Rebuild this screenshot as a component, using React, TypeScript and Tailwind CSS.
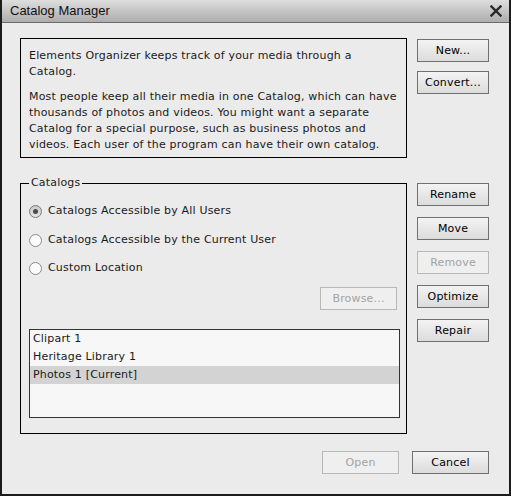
import React from 'react';

const font = { fontFamily: '"DejaVu Sans", Verdana, sans-serif' };

function Btn({ label, w = 'w-[72px]', disabled = false }: { label: string; w?: string; disabled?: boolean }) {
  return (
    <button
      type="button"
      disabled={disabled}
      className={`${w} h-[23px] shrink-0 border text-[11px] leading-none tracking-[0.18px] ${
        disabled
          ? 'border-[#b8b8b8] bg-[#efefef] text-[#a3a3a3]'
          : 'border-[#707070] bg-gradient-to-b from-[#f3f3f3] to-[#dcdcdc] text-black'
      }`}
    >
      {label}
    </button>
  );
}

function Radio({ label, checked = false }: { label: string; checked?: boolean }) {
  return (
    <div className="flex h-[16px] items-center gap-[6px]">
      <span
        className={`flex h-[13px] w-[13px] items-center justify-center rounded-full border ${
          checked ? 'border-[#7a7a7a] bg-gradient-to-b from-[#c8c8c8] to-[#e6e6e6]' : 'border-[#8a8a8a] bg-[#fbfbfb]'
        }`}
      >
        {checked ? <span className="h-[5px] w-[5px] rounded-full bg-[#4a4a4a]" /> : null}
      </span>
      <span>{label}</span>
    </div>
  );
}

const catalogs = ['Clipart 1', 'Heritage Library 1', 'Photos 1 [Current]'];

export default function App() {
  return (
    <div
      className="flex h-[496px] w-[511px] flex-col border-x-2 border-b-2 border-[#1c1c1c] bg-[#ebebeb] text-[11px] leading-[16px] tracking-[0.18px] text-[#1a1a1a]"
      style={font}
    >
      <div className="flex h-[23px] shrink-0 items-center justify-between border-b border-[#6b6b6b] bg-gradient-to-b from-[#dedede] to-[#adadad] pl-[8px] pr-[7px]">
        <span className="font-['Liberation_Sans',Arial,sans-serif] text-[13px] tracking-normal text-[#111]">
          Catalog Manager
        </span>
        <svg width="12" height="12" viewBox="0 0 12 12" className="text-[#2a2a2a]">
          <path d="M1.5 1.5 L10.5 10.5 M10.5 1.5 L1.5 10.5" stroke="currentColor" strokeWidth="2.4" strokeLinecap="square" />
        </svg>
      </div>

      <div className="flex flex-1 flex-col pl-[18px] pr-[20px]">
        <div className="mt-[15px] flex items-start gap-[10px]">
          <div className="h-[120px] w-[387px] shrink-0 whitespace-nowrap border border-black px-[8px] pt-[9px]">
            <p>
              Elements Organizer keeps track of your media through a
              <br />
              Catalog.
            </p>
            <p className="mt-[9px]">
              Most people keep all their media in one Catalog, which can have
              <br />
              thousands of photos and videos. You might want a separate
              <br />
              Catalog for a special purpose, such as business photos and
              <br />
              videos. Each user of the program can have their own catalog.
            </p>
          </div>
          <div className="mt-[1px] flex flex-col gap-[9px]">
            <Btn label="New..." />
            <Btn label="Convert..." />
          </div>
        </div>

        <div className="mt-[25px] flex items-start gap-[10px]">
          <div className="relative h-[251px] w-[387px] shrink-0 border border-black">
            <span className="absolute -top-[9px] left-[8px] bg-[#ebebeb] px-[2px]">Catalogs</span>
            <div className="flex flex-col pl-[8px] pt-[19px]">
              <Radio label="Catalogs Accessible by All Users" checked />
              <div className="mt-[13px]">
                <Radio label="Catalogs Accessible by the Current User" />
              </div>
              <div className="mt-[12px]">
                <Radio label="Custom Location" />
              </div>
              <div className="mt-[11px] flex justify-end pr-[9px]">
                <Btn label="Browse..." w="w-[77px]" disabled />
              </div>
              <div className="mt-[19px] h-[89px] w-[371px] border border-[#333] bg-[#f7f7f7]">
                {catalogs.map((c, i) => (
                  <div
                    key={c}
                    className={`h-[18px] pl-[3px] leading-[18px] ${i === 2 ? 'bg-[#d3d3d3]' : ''}`}
                  >
                    {c}
                  </div>
                ))}
              </div>
            </div>
          </div>
          <div className="flex flex-col gap-[11px]">
            <Btn label="Rename" />
            <Btn label="Move" />
            <Btn label="Remove" disabled />
            <Btn label="Optimize" />
            <Btn label="Repair" />
          </div>
        </div>

        <div className="mt-[17px] flex justify-end gap-[13px]">
          <Btn label="Open" w="w-[77px]" disabled />
          <Btn label="Cancel" w="w-[77px]" />
        </div>
      </div>
    </div>
  );
}
